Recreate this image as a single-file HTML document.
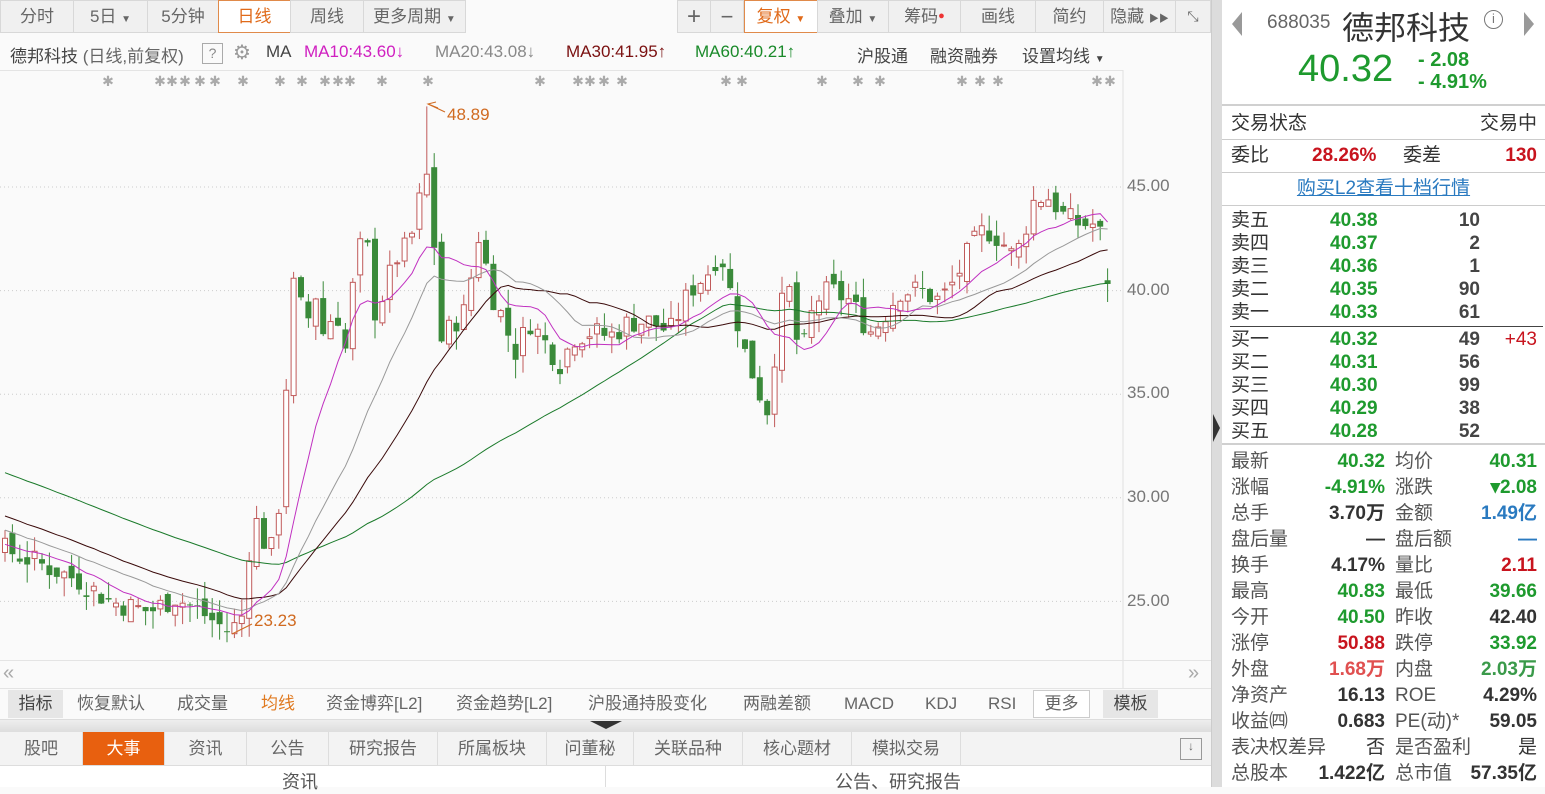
<!DOCTYPE html>
<html><head><meta charset="utf-8"><style>
*{margin:0;padding:0;box-sizing:border-box}
body{width:1545px;height:787px;overflow:hidden;background:#fafafa;font-family:"Liberation Sans","Noto Sans CJK SC",sans-serif;color:#333;position:relative}
.a{position:absolute;white-space:nowrap}
.btn{position:absolute;top:0;height:33px;background:#f0f0f0;border:1px solid #d8d8d8;font-size:17px;color:#666;text-align:center;line-height:31px}
.sel{background:#fff;border:1px solid #e08a4a;color:#e06a1a}
.leg{position:absolute;top:42px;font-size:17px}
.rp{position:absolute;left:1222px;top:0;width:323px;height:787px;background:#fff}
.row{position:absolute;left:0;width:323px;font-size:19px;height:24px;line-height:24px}
.g{color:#1e9a2e;font-weight:bold}.r{color:#c8141e;font-weight:bold}.k{color:#333;font-weight:bold}
.hl{position:absolute;left:0;width:323px;height:1px;background:#ccc}
.tab{position:absolute;top:732px;height:33px;line-height:33px;font-size:17px;color:#666;text-align:center;border-right:1px solid #ddd}
.ind{position:absolute;top:690px;height:28px;line-height:28px;font-size:17px;color:#666}
</style></head><body>
<div class="btn" style="left:0;width:74px">分时</div>
<div class="btn" style="left:73px;width:75px">5日 <span style="font-size:10px">▼</span></div>
<div class="btn" style="left:147px;width:72px">5分钟</div>
<div class="btn sel" style="left:218px;width:73px">日线</div>
<div class="btn" style="left:290px;width:74px">周线</div>
<div class="btn" style="left:363px;width:103px">更多周期 <span style="font-size:10px">▼</span></div>
<div class="btn" style="left:677px;width:34px;font-size:24px">+</div>
<div class="btn" style="left:710px;width:34px;font-size:22px">−</div>
<div class="btn sel" style="left:744px;width:74px">复权 <span style="font-size:10px">▼</span></div>
<div class="btn" style="left:817px;width:72px">叠加 <span style="font-size:10px">▼</span></div>
<div class="btn" style="left:888px;width:73px">筹码<span style="color:#e33;font-size:11px;vertical-align:top">●</span></div>
<div class="btn" style="left:960px;width:76px">画线</div>
<div class="btn" style="left:1035px;width:69px">简约</div>
<div class="btn" style="left:1103px;width:73px">隐藏 <span style="font-size:10px">▶▶</span></div>
<div class="btn" style="left:1175px;width:36px;font-size:14px">⤡</div>
<div class="leg" style="left:10px;color:#444">德邦科技 <span style="color:#666">(日线,前复权)</span></div>
<div class="a" style="left:202px;top:43px;width:21px;height:21px;border:1px solid #aaa;font-size:14px;text-align:center;line-height:19px;color:#888">?</div>
<div class="a" style="left:233px;top:40px;font-size:20px;color:#999">⚙</div>
<div class="leg" style="left:266px;color:#444">MA</div>
<div class="leg" style="left:304px;color:#d020c0">MA10:43.60↓</div>
<div class="leg" style="left:435px;color:#888">MA20:43.08↓</div>
<div class="leg" style="left:566px;color:#7a1010">MA30:41.95↑</div>
<div class="leg" style="left:695px;color:#1a8a2a">MA60:40.21↑</div>
<div class="leg" style="left:857px;color:#444">沪股通</div>
<div class="leg" style="left:930px;color:#444">融资融券</div>
<div class="leg" style="left:1022px;color:#444">设置均线 <span style="font-size:10px">▼</span></div>
<div class="a" style="left:0;top:70px;width:1123px;height:1px;background:#e4e4e4"></div>
<svg class="a" style="left:0;top:0" width="1212" height="690" id="ch"></svg>
<div class="a" style="left:1127px;top:176px;font-size:17px;color:#777">45.00</div>
<div class="a" style="left:1127px;top:280px;font-size:17px;color:#777">40.00</div>
<div class="a" style="left:1127px;top:383px;font-size:17px;color:#777">35.00</div>
<div class="a" style="left:1127px;top:487px;font-size:17px;color:#777">30.00</div>
<div class="a" style="left:1127px;top:591px;font-size:17px;color:#777">25.00</div>
<div class="a" style="left:447px;top:105px;font-size:17px;color:#d06a20">48.89</div>
<div class="a" style="left:254px;top:611px;font-size:17px;color:#d06a20">23.23</div>
<div class="a" style="left:0;top:660px;width:1212px;height:1px;background:#e4e4e4"></div>
<div class="a" style="left:3px;top:662px;font-size:20px;color:#aaa">«</div>
<div class="a" style="left:1188px;top:662px;font-size:20px;color:#aaa">»</div>
<div class="a" style="left:0;top:688px;width:1212px;height:1px;background:#e4e4e4"></div>
<div class="a" style="left:0;top:689px;width:1212px;height:30px;background:#fafafa"></div>
<div class="ind" style="left:8px;width:55px;background:#e6e6e6;text-align:center;color:#444">指标</div>
<div class="ind" style="left:77px">恢复默认</div>
<div class="ind" style="left:177px">成交量</div>
<div class="ind" style="left:261px;color:#e07a20">均线</div>
<div class="ind" style="left:326px">资金博弈[L2]</div>
<div class="ind" style="left:456px">资金趋势[L2]</div>
<div class="ind" style="left:588px">沪股通持股变化</div>
<div class="ind" style="left:743px">两融差额</div>
<div class="ind" style="left:844px">MACD</div>
<div class="ind" style="left:925px">KDJ</div>
<div class="ind" style="left:988px">RSI</div>
<div class="ind" style="left:1033px;width:57px;border:1px solid #ccc;background:#fff;text-align:center;line-height:26px">更多</div>
<div class="ind" style="left:1103px;width:55px;background:#e6e6e6;text-align:center;color:#444">模板</div>
<div class="a" style="left:0;top:719px;width:1212px;height:13px;background:linear-gradient(#eee,#ddd);border-top:1px solid #ddd"></div>
<div class="a" style="left:590px;top:721px;width:0;height:0;border-left:16px solid transparent;border-right:16px solid transparent;border-top:8px solid #333"></div>
<div class="a" style="left:0;top:732px;width:1212px;height:34px;background:#f3f3f3;border-bottom:1px solid #ddd"></div>
<div class="tab" style="left:0;width:83px">股吧</div>
<div class="tab" style="left:83px;width:82px;background:#e8600f;color:#fff">大事</div>
<div class="tab" style="left:165px;width:82px">资讯</div>
<div class="tab" style="left:247px;width:82px">公告</div>
<div class="tab" style="left:329px;width:109px">研究报告</div>
<div class="tab" style="left:438px;width:109px">所属板块</div>
<div class="tab" style="left:547px;width:87px">问董秘</div>
<div class="tab" style="left:634px;width:109px">关联品种</div>
<div class="tab" style="left:743px;width:109px">核心题材</div>
<div class="tab" style="left:852px;width:109px">模拟交易</div>
<div class="a" style="left:1180px;top:738px;width:22px;height:22px;border:1px solid #999;font-size:12px;text-align:center;color:#666">↓</div>
<div class="a" style="left:0;top:766px;width:1212px;height:21px;background:#fff"></div>
<div class="a" style="left:605px;top:766px;width:1px;height:21px;background:#ddd"></div>
<div class="a" style="left:282px;top:768px;font-size:18px;color:#555">资讯</div>
<div class="a" style="left:835px;top:768px;font-size:18px;color:#555">公告、研究报告</div>
<div class="a" style="left:1211px;top:0;width:11px;height:787px;background:#dcdcdc;border-left:1px solid #ccc"></div>
<div class="a" style="left:1213px;top:414px;width:0;height:0;border-top:14px solid transparent;border-bottom:14px solid transparent;border-left:7px solid #333"></div>
<div class="rp">
<div class="a" style="left:10px;top:12px;width:0;height:0;border-top:12px solid transparent;border-bottom:12px solid transparent;border-right:10px solid #999"></div>
<div class="a" style="left:302px;top:12px;width:0;height:0;border-top:12px solid transparent;border-bottom:12px solid transparent;border-left:10px solid #999"></div>
<div class="a" style="left:45px;top:12px;font-size:19px;color:#666">688035</div>
<div class="a" style="left:120px;top:3px;font-size:32px;color:#333">德邦科技</div>
<div class="a" style="left:262px;top:10px;width:19px;height:19px;border:1.5px solid #777;border-radius:50%;font-size:13px;text-align:center;line-height:16px;color:#777">i</div>
<div class="a g" style="left:76px;top:48px;font-size:38px;font-weight:normal;color:#1e9a2e">40.32</div>
<div class="a g" style="left:196px;top:49px;font-size:20px">- 2.08</div>
<div class="a g" style="left:196px;top:71px;font-size:20px">- 4.91%</div>
<div class="hl" style="top:104px;height:2px;background:#d0d0d0"></div>
<div class="row" style="top:112px"><span class="a" style="left:9px">交易状态</span><span class="a" style="right:8px">交易中</span></div>
<div class="hl" style="top:139px"></div>
<div class="row" style="top:144px"><span class="a" style="left:9px">委比</span><span class="a r" style="left:90px">28.26%</span><span class="a" style="left:181px">委差</span><span class="a r" style="right:8px">130</span></div>
<div class="hl" style="top:172px"></div>
<div class="row" style="top:177px;text-align:center;color:#2a7ac0;text-decoration:underline">购买L2查看十档行情</div>
<div class="hl" style="top:205px"></div>
<div id="ob"></div>
<div class="hl" style="top:326px;background:#444;left:8px;width:313px"></div>
<div class="hl" style="top:443px;height:2px;background:#d0d0d0"></div>
<div id="st"></div>
</div>
<script>
var ob='',s=[['卖五','40.38','10'],['卖四','40.37','2'],['卖三','40.36','1'],['卖二','40.35','90'],['卖一','40.33','61'],['买一','40.32','49','+43'],['买二','40.31','56'],['买三','40.30','99'],['买四','40.29','38'],['买五','40.28','52']];
s.forEach(function(r,i){var t=i<5?209+i*23:328+(i-5)*23;ob+='<div class="row" style="top:'+t+'px"><span class="a" style="left:9px">'+r[0]+'</span><span class="a g" style="left:108px">'+r[1]+'</span><span class="a k" style="right:65px;color:#444">'+r[2]+'</span>'+(r[3]?'<span class="a" style="right:8px;color:#c8141e">'+r[3]+'</span>':'')+'</div>';});
document.getElementById('ob').innerHTML=ob;
var st=[['最新','40.32','g','均价','40.31','g'],['涨幅','-4.91%','g','涨跌','▾2.08','g'],['总手','3.70万','k','金额','1.49亿','b'],['盘后量','—','k','盘后额','—','b'],['换手','4.17%','k','量比','2.11','r'],['最高','40.83','g','最低','39.66','g'],['今开','40.50','g','昨收','42.40','k'],['涨停','50.88','r','跌停','33.92','g'],['外盘','1.68万','r2','内盘','2.03万','g2'],['净资产','16.13','k','ROE','4.29%','k'],['收益㈣','0.683','k','PE(动)*','59.05','k'],['表决权差异','否','n','是否盈利','是','n'],['总股本','1.422亿','k','总市值','57.35亿','k']];
var cs={g:'color:#1e9a2e;font-weight:bold',k:'color:#333;font-weight:bold',r:'color:#c8141e;font-weight:bold',b:'color:#2a7ac0;font-weight:bold',r2:'color:#e05050;font-weight:bold',g2:'color:#3a9a4a;font-weight:bold',n:'color:#333'};
var h='';st.forEach(function(r,i){var t=450+i*26;h+='<div class="row" style="top:'+t+'px"><span class="a" style="left:9px;color:#555">'+r[0]+'</span><span class="a" style="right:160px;'+cs[r[2]]+'">'+r[1]+'</span><span class="a" style="left:173px;color:#555">'+r[3]+'</span><span class="a" style="right:8px;'+cs[r[5]]+'">'+r[4]+'</span></div>';});
document.getElementById('st').innerHTML=h;
var kp=[[5,27.5],[40,26.8],[80,26],[110,25],[150,24.5],[175,25.2],[200,24.5],[230,23.5],[245,24.5],[252,29.5],[262,28],[272,27.5],[280,30],[288,37],[295,41],[305,38],[315,40],[325,37.5],[335,39.5],[345,37],[355,41],[365,43],[375,39],[385,40],[395,41.5],[405,42],[415,43],[425,46],[432,44],[440,37.5],[455,38.5],[465,39],[480,43],[490,40],[500,39],[515,37],[530,38.5],[545,37.5],[560,36.5],[575,37.8],[590,38],[610,37.8],[630,38.5],[650,38.5],[670,38],[690,40],[710,41],[720,42],[730,40],[745,37],[760,35],[770,34],[778,39],[790,40],[800,36.5],[815,39.5],[830,40],[850,39.5],[870,38],[880,38.5],[900,40],[920,40],[940,39.5],[955,40.5],[970,42],[985,43],[1000,42.5],[1015,41.5],[1025,43],[1035,44.5],[1050,44.5],[1065,43.5],[1080,43.2],[1095,43.2],[1105,42.3],[1112,40.3]];
function P(x){for(var i=1;i<kp.length;i++)if(x<=kp[i][0]){var a=kp[i-1],b=kp[i];return a[1]+(b[1]-a[1])*(x-a[0])/(b[0]-a[0]);}return kp[kp.length-1][1];}
function Y(p){return 187+(45-p)*20.72}
var seed=7;function rnd(){seed=(seed*9301+49297)%233280;return seed/233280;}
var hist=[];for(var i=0;i<60;i++)hist.push(35.5-i*0.14+(rnd()-0.5)*0.6);
var N=Math.floor((1112-5)/7.4)+1,cl=[],out='';
for(var g=45;g>=25;g-=5)out+='<line x1="0" x2="1123" y1="'+Y(g)+'" y2="'+Y(g)+'" stroke="#ccc" stroke-dasharray="1,3"/>';
out+='<line x1="1123" x2="1123" y1="70" y2="688" stroke="#e0e0e0"/>';
var prev=P(5);
for(var i=0;i<N;i++){var x=5+i*7.4,c=P(x)+(rnd()-0.5)*1.2,o=prev+(rnd()-0.5)*0.8;if(i==N-1){c=40.32;o=40.5;}
var hi=Math.max(o,c)+rnd()*0.9,lo=Math.min(o,c)-rnd()*0.9;if(Math.abs(x-425)<4)hi=48.89;if(Math.abs(x-235)<4)lo=23.23;
cl.push(c);prev=c;var up=c>=o,col=up?'#c05a5a':'#3a8a3a';
out+='<line x1="'+x+'" x2="'+x+'" y1="'+Y(hi)+'" y2="'+Y(lo)+'" stroke="'+col+'"/>';
var t=Y(Math.max(o,c)),hh=Math.max(1,Math.abs(Y(o)-Y(c)));
out+=up?'<rect x="'+(x-2.5)+'" y="'+t+'" width="5" height="'+hh+'" fill="#fff" stroke="'+col+'"/>':'<rect x="'+(x-3)+'" y="'+t+'" width="6" height="'+hh+'" fill="'+col+'"/>';}
var all=hist.concat(cl);
function ma(n,col){var pts=[];for(var i=0;i<cl.length;i++){var j=i+60,s=0;for(var k=j-n+1;k<=j;k++)s+=all[k];pts.push((5+i*7.4).toFixed(1)+','+Y(s/n).toFixed(1));}return '<polyline fill="none" stroke="'+col+'" stroke-width="1" points="'+pts.join(' ')+'"/>';}
out+=ma(60,'#1a7a2a')+ma(30,'#3a0a0a')+ma(20,'#999')+ma(10,'#c030c0');
out+='<polyline points="438,108 428,104 436,102" fill="none" stroke="#d06a20"/><line x1="428" y1="104" x2="445" y2="112" stroke="#d06a20"/>';
out+='<line x1="232" y1="634" x2="252" y2="624" stroke="#d06a20"/>';
var stars=[108,160,172,185,200,215,243,280,302,325,338,350,382,428,540,578,590,604,622,726,742,822,858,880,962,980,998,1097,1110];
stars.forEach(function(x){out+='<text x="'+x+'" y="86" font-size="14" fill="#aaa" text-anchor="middle" font-family="DejaVu Sans">✱</text>';});
document.getElementById('ch').innerHTML=out;
</script>
</body></html>
